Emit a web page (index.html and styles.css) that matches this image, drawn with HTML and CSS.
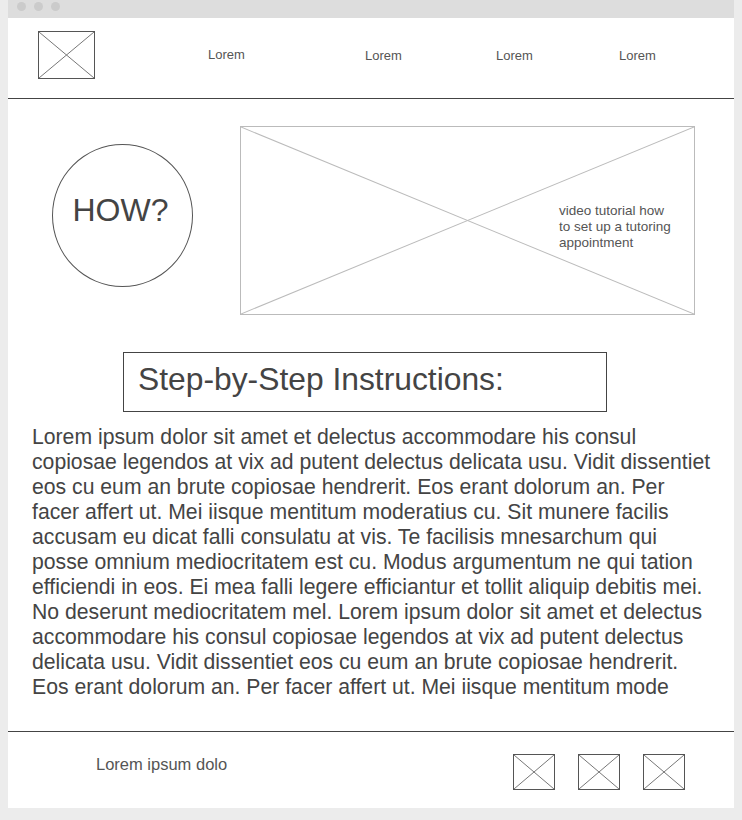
FILE: index.html
```html
<!DOCTYPE html>
<html lang="en">
<head>
    <meta charset="UTF-8">
    <meta name="viewport" content="width=device-width, initial-scale=1.0">
    <title>How to book a tutor</title>
    <link rel="stylesheet" href="styles.css">
</head>
<body>
    <div class="window">
        <div class="titlebar">
            <span class="dot"></span>
            <span class="dot"></span>
            <span class="dot"></span>
        </div>

        <header class="header">
            <div class="placeholder logo">
                <svg viewBox="0 0 100 100" preserveAspectRatio="none"><line x1="0" y1="0" x2="100" y2="100"/><line x1="100" y1="0" x2="0" y2="100"/></svg>
            </div>
            <a class="nav-link nav-first" href="#">Lorem</a>
            <a class="nav-link" href="#">Lorem</a>
            <a class="nav-link" href="#">Lorem</a>
            <a class="nav-link" href="#">Lorem</a>
        </header>

        <section class="hero">
            <div class="how">HOW?</div>
            <div class="video">
                <svg viewBox="0 0 100 100" preserveAspectRatio="none"><line x1="0" y1="0" x2="100" y2="100"/><line x1="100" y1="0" x2="0" y2="100"/></svg>
                <!-- caption sits on top of the placeholder -->
                <p class="video-caption">video tutorial how to set up a tutoring appointment</p>
            </div>
        </section>

        <h2 class="steps-title">Step-by-Step Instructions:</h2>

        <p class="steps-text">Lorem ipsum dolor sit amet et delectus accommodare his consul copiosae legendos at vix ad putent delectus delicata usu. Vidit dissentiet eos cu eum an brute copiosae hendrerit. Eos erant dolorum an. Per facer affert ut. Mei iisque mentitum moderatius cu. Sit munere facilis accusam eu dicat falli consulatu at vis. Te facilisis mnesarchum qui posse omnium mediocritatem est cu. Modus argumentum ne qui tation efficiendi in eos. Ei mea falli legere efficiantur et tollit aliquip debitis mei. No deserunt mediocritatem mel. Lorem ipsum dolor sit amet et delectus accommodare his consul copiosae legendos at vix ad putent delectus delicata usu. Vidit dissentiet eos cu eum an brute copiosae hendrerit. Eos erant dolorum an. Per facer affert ut. Mei iisque mentitum mode</p>

        <footer class="footer">
            <span class="footer-text">Lorem ipsum dolo</span>
            <div class="social">
                <div class="placeholder icon">
                    <svg viewBox="0 0 100 100" preserveAspectRatio="none"><line x1="0" y1="0" x2="100" y2="100"/><line x1="100" y1="0" x2="0" y2="100"/></svg>
                </div>
                <div class="placeholder icon">
                    <svg viewBox="0 0 100 100" preserveAspectRatio="none"><line x1="0" y1="0" x2="100" y2="100"/><line x1="100" y1="0" x2="0" y2="100"/></svg>
                </div>
                <div class="placeholder icon">
                    <svg viewBox="0 0 100 100" preserveAspectRatio="none"><line x1="0" y1="0" x2="100" y2="100"/><line x1="100" y1="0" x2="0" y2="100"/></svg>
                </div>
            </div>
        </footer>
    </div>
</body>
</html>
```

FILE: styles.css
```css
body {
    margin: 0;
    background-color: #ececec;
    font-family: "Liberation Sans", Arial, sans-serif;
    color: #444;
}

.window {
    width: 726px;
    margin-left: 8px;
    background-color: #fff;
}

.titlebar {
    height: 18px;
    background-color: #dddddd;
    display: flex;
    align-items: flex-start;
    gap: 8px;
    padding: 2px 0 0 9px;
    box-sizing: border-box;
}

.dot {
    width: 9px;
    height: 9px;
    border-radius: 50%;
    background-color: #cbcbcb;
}

/* placeholder boxes with an X through them */
.placeholder {
    box-sizing: border-box;
    border: 1px solid #555;
}

.placeholder svg,
.video svg {
    display: block;
    width: 100%;
    height: 100%;
}

.placeholder line {
    stroke: #777;
    stroke-width: 1;
    vector-effect: non-scaling-stroke;
}

.header {
    height: 81px;
    box-sizing: border-box;
    border-bottom: 1px solid #444;
    display: grid;
    grid-template-columns: 170px 157px 131px 123px auto;
    align-items: start;
    padding: 13px 0 0 30px;
}

.logo {
    width: 57px;
    height: 48px;
}

.nav-link {
    font-size: 13px;
    color: #555;
    text-decoration: none;
    margin-top: 17px;
}

.nav-first {
    margin-top: 16px;
}

.hero {
    display: flex;
    align-items: flex-start;
    gap: 47px;
    padding: 27px 0 0 44px;
}

.how {
    width: 141px;
    height: 143px;
    margin-top: 18px;
    box-sizing: border-box;
    border: 1px solid #555;
    border-radius: 50%;
    display: flex;
    align-items: center;
    justify-content: center;
    font-size: 32px;
    padding: 0 4px 11px 0;
    color: #444;
}

.video {
    position: relative;
    width: 455px;
    height: 189px;
    box-sizing: border-box;
    border: 1px solid #bbb;
}

.video line {
    stroke: #bbb;
    stroke-width: 1;
    vector-effect: non-scaling-stroke;
}

.video-caption {
    position: absolute;
    left: 318px;
    top: 76px;
    width: 120px;
    margin: 0;
    font-size: 13.5px;
    line-height: 16px;
    color: #555;
}

.steps-title {
    width: 484px;
    height: 60px;
    box-sizing: border-box;
    margin: 37px 0 0 115px;
    border: 1px solid #444;
    padding: 8px 0 0 14px;
    font-size: 31.8px;
    font-weight: normal;
    color: #444;
}

.steps-text {
    margin: 12px 0 0;
    padding: 0 21px 0 24px;
    font-size: 21.2px;
    line-height: 25px;
    color: #444;
}

.footer {
    margin-top: 32px;
    height: 77px;
    box-sizing: border-box;
    border-top: 1px solid #444;
    display: flex;
    justify-content: space-between;
    align-items: flex-start;
    padding: 22px 49px 0 88px;
}

.footer-text {
    margin-top: 1px;
    font-size: 16.5px;
    color: #555;
}

.social {
    display: flex;
    gap: 23px;
}

.icon {
    width: 42px;
    height: 36px;
}
```
